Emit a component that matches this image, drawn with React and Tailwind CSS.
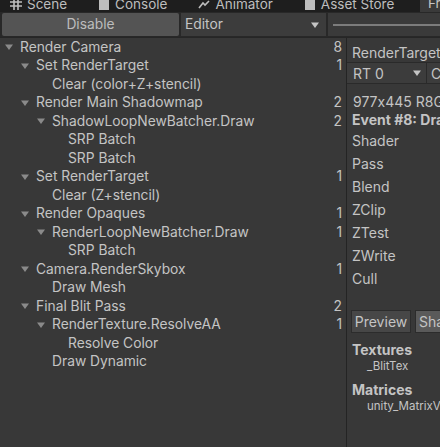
import React from 'react';

const tree = [
    { level: 0, label: 'Render Camera', count: '8', open: true },
    { level: 1, label: 'Set RenderTarget', count: '1', open: true },
    { level: 2, label: 'Clear (color+Z+stencil)' },
    { level: 1, label: 'Render Main Shadowmap', count: '2', open: true },
    { level: 2, label: 'ShadowLoopNewBatcher.Draw', count: '2', open: true },
    { level: 3, label: 'SRP Batch' },
    { level: 3, label: 'SRP Batch' },
    { level: 1, label: 'Set RenderTarget', count: '1', open: true },
    { level: 2, label: 'Clear (Z+stencil)' },
    { level: 1, label: 'Render Opaques', count: '1', open: true },
    { level: 2, label: 'RenderLoopNewBatcher.Draw', count: '1', open: true },
    { level: 3, label: 'SRP Batch' },
    { level: 1, label: 'Camera.RenderSkybox', count: '1', open: true },
    { level: 2, label: 'Draw Mesh' },
    { level: 1, label: 'Final Blit Pass', count: '2', open: true },
    { level: 2, label: 'RenderTexture.ResolveAA', count: '1', open: true },
    { level: 3, label: 'Resolve Color' },
    { level: 2, label: 'Draw Dynamic' },
];

const indent = ['pl-[5px]', 'pl-[21px]', 'pl-[37px]', 'pl-[53px]'];

const stateRows = ['Shader', 'Pass', 'Blend', 'ZClip', 'ZTest', 'ZWrite', 'Cull'];

function Caret({ className = 'fill-[#8a8a8a]' }) {
    return (
        <svg width="8" height="6" viewBox="0 0 8 6" className={className}>
            <path d="M0 0.5h8L4 6z" />
        </svg>
    );
}

function Tab({ icon, label }) {
    return (
        <div className="flex items-center gap-[5px] text-[#bdbdbd]">
            {icon}
            <span>{label}</span>
        </div>
    );
}

function TabBar() {
    return (
        <div className="h-[12px] bg-[#1e1e1e] overflow-hidden flex text-[13.5px] leading-4 whitespace-nowrap">
            <div className="flex-1 flex -mt-[5px] pl-[10px] gap-[31px]">
                <Tab
                    label="Scene"
                    icon={
                        <svg width="12" height="12" viewBox="0 0 12 12" className="stroke-[#bdbdbd]" strokeWidth="1.6" fill="none">
                            <path d="M4 0v12M8 0v12M0 4h12M0 8h12" />
                        </svg>
                    }
                />
                <Tab
                    label="Console"
                    icon={
                        <svg width="12" height="12" viewBox="0 0 12 12" className="fill-[#bdbdbd]">
                            <path d="M1 0h10v12H1z" />
                        </svg>
                    }
                />
                <Tab
                    label="Animator"
                    icon={
                        <svg width="12" height="12" viewBox="0 0 12 12" className="stroke-[#bdbdbd]" strokeWidth="1.6" fill="none">
                            <path d="M1 10l4-5 2 2 4-4" />
                        </svg>
                    }
                />
                <Tab
                    label="Asset Store"
                    icon={
                        <svg width="12" height="12" viewBox="0 0 12 12" className="fill-[#bdbdbd]">
                            <path d="M1 2h10v10H1z" />
                        </svg>
                    }
                />
            </div>
            <div className="w-[20px] bg-[#3a3a3a] -mt-[5px] pl-[8px] text-[#c4c4c4]">Frame Debug</div>
        </div>
    );
}

function Toolbar() {
    return (
        <div className="h-[25px] bg-[#282828] flex items-stretch pt-[1px] pb-[1px] pl-[2px] gap-[2px] text-[13.8px] text-[#c4c4c4]">
            <div className="w-[177px] shrink-0 bg-[#545454] rounded-[2px] flex items-center justify-center text-[#bcbcbc]">Disable</div>
            <div className="w-[145px] shrink-0 bg-[#3c3c3c] flex items-center justify-between pl-[4px] pr-[7px]">
                <span>Editor</span>
                <Caret className="fill-[#c4c4c4]" />
            </div>
            <div className="flex-1 bg-[#3a3a3a] flex items-center pl-[5px]">
                <div className="h-[2px] w-full bg-[#7c7c7c]" />
            </div>
        </div>
    );
}

function TreeRow({ item }) {
    return (
        <div className={`h-[18.5px] flex items-center pr-[4px] ${indent[item.level]}`}>
            <div className="w-[15px] shrink-0 flex items-center">{item.open && <Caret />}</div>
            <span className="flex-1 truncate">{item.label}</span>
            <span className="text-right">{item.count}</span>
        </div>
    );
}

export default function App() {
    return (
        <div className="w-[440px] h-[447px] bg-[#383838] overflow-hidden flex flex-col font-['Inter',sans-serif] text-[#c4c4c4]">
            <TabBar />
            <Toolbar />
            <div className="flex-1 flex border-t border-[#262626] min-h-0">
                <div className="w-[346px] shrink-0 text-[13.8px]">
                    {tree.map((item, i) => (
                        <TreeRow key={i} item={item} />
                    ))}
                </div>
                <div className="w-[1px] shrink-0 bg-[#242424]" />
                <div className="flex-1 overflow-hidden whitespace-nowrap text-[14px]">
                    <div className="h-[18px] mt-[5px] pl-[5px] flex items-center">RenderTarget</div>
                    <div className="h-[22px] mt-[1px] flex border-y border-[#2a2a2a]">
                        <div className="w-[80px] shrink-0 bg-[#3c3c3c] flex items-center justify-between pl-[6px] pr-[5px] border-r border-[#2a2a2a]">
                            <span>RT 0</span>
                            <Caret className="fill-[#c4c4c4]" />
                        </div>
                        <div className="shrink-0 bg-[#3c3c3c] flex items-center pl-[4px] pr-[4px]">Channels</div>
                    </div>
                    <div className="h-[18px] mt-[8px] pl-[6px] flex items-center [font-feature-settings:'calt'_0]">977x445 R8G8B8A8_UNorm</div>
                    <div className="h-[19px] pl-[5px] flex items-center font-bold">Event #8: Draw Dynamic</div>
                    <div className="pl-[5px]">
                        {stateRows.map((s) => (
                            <div key={s} className="h-[23px] flex items-center">{s}</div>
                        ))}
                    </div>
                    <div className="mt-[20px] h-[23px] pl-[4px] flex gap-[4px]">
                        <div className="w-[60px] shrink-0 bg-[#474747] border border-[#2c2c2c] flex items-center justify-center">Preview</div>
                        <div className="shrink-0 bg-[#5a5a5a] border border-[#2c2c2c] flex items-center pl-[3px] pr-[4px]">Shader Properties</div>
                    </div>
                    <div className="mt-[7px] pl-[5px] h-[18px] flex items-center font-bold">Textures</div>
                    <div className="pl-[20px] h-[18px] flex items-center text-[11.5px]">_BlitTex</div>
                    <div className="mt-[4px] pl-[5px] h-[19px] flex items-center font-bold">Matrices</div>
                    <div className="pl-[20px] h-[16px] flex items-center text-[11.5px]">unity_MatrixVP</div>
                </div>
            </div>
        </div>
    );
}
